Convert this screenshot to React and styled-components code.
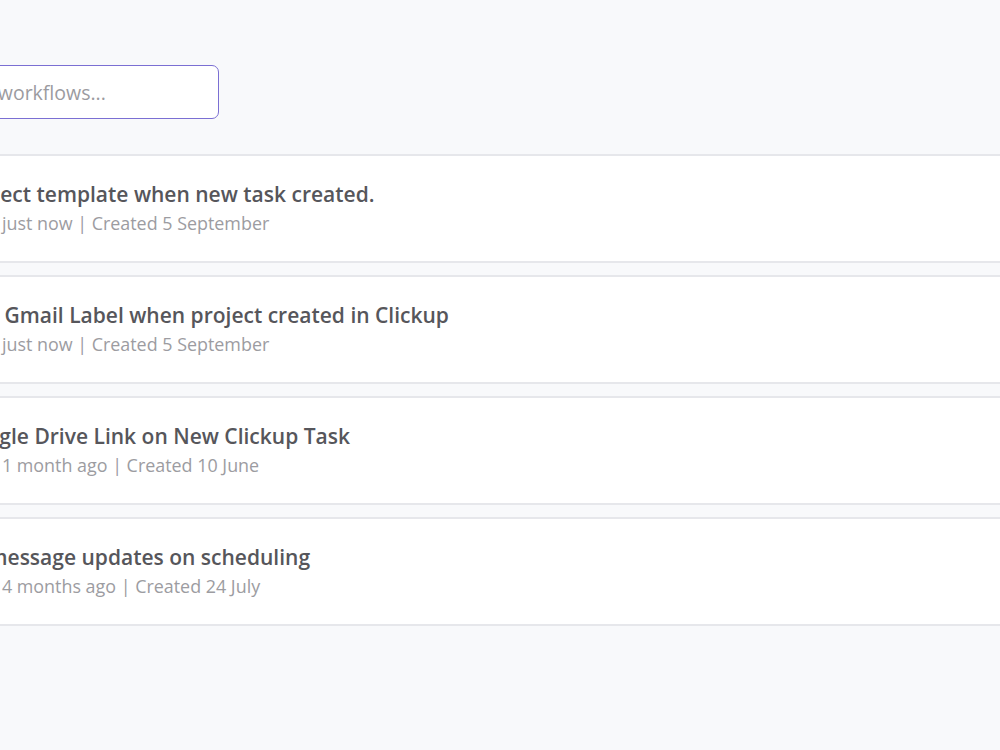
import React from 'react';
import styled, { createGlobalStyle } from 'styled-components';

const GlobalStyle = createGlobalStyle`
  html, body {
    margin: 0;
    padding: 0;
    background: #f8f9fb;
    overflow: hidden;
  }
  body {
    font-family: 'Open Sans', 'Liberation Sans', sans-serif;
  }
`;

const Page = styled.div`
  width: 1000px;
  height: 750px;
  overflow: hidden;
  background: #f8f9fb;
`;

const Content = styled.div`
  margin-left: -98px;
  width: 1140px;
  padding-top: 65px;
`;

const SearchBox = styled.input`
  display: block;
  box-sizing: border-box;
  width: 317px;
  height: 54px;
  padding: 0 18px 0 28px;
  border: 1.5px solid #7b6fd3;
  border-radius: 7px;
  background: #fff;
  font-family: inherit;
  font-size: 19.5px;
  color: #555;
  outline: none;

  &::placeholder {
    color: #9b9ba0;
  }
`;

const List = styled.div`
  display: flex;
  flex-direction: column;
  gap: 12px;
  margin-top: 35px;
`;

const Card = styled.div`
  box-sizing: border-box;
  height: 109px;
  padding: 25px 24px 0;
  background: #fff;
  border-top: 2px solid #e6e7eb;
  border-bottom: 2px solid #e6e7eb;
`;

const Title = styled.div`
  margin-left: ${(p) => p.$indent || 0}px;
  font-size: 21px;
  font-weight: 600;
  line-height: 26px;
  color: #56565b;
  white-space: nowrap;
`;

const Meta = styled.div`
  margin-top: 4px;
  margin-left: -1px;
  font-size: 17.9px;
  line-height: 24px;
  color: #9c9ca1;
  white-space: nowrap;
`;

const workflows = [
  { title: 'Use project template when new task created.', indent: -10, updated: 'just now', created: '5 September' },
  { title: 'Create Gmail Label when project created in Clickup', indent: 6, updated: 'just now', created: '5 September' },
  { title: 'Add Google Drive Link on New Clickup Task', indent: -13, updated: '1 month ago', created: '10 June' },
  { title: 'Send message updates on scheduling', indent: 6, updated: '4 months ago', created: '24 July' },
];

export default function App() {
  return (
    <Page>
      <GlobalStyle />
      <Content>
        <SearchBox placeholder="Search workflows..." />
        <List>
          {workflows.map((w) => (
            <Card key={w.title}>
              <Title $indent={w.indent}>{w.title}</Title>
              <Meta>
                Updated {w.updated} | Created {w.created}
              </Meta>
            </Card>
          ))}
        </List>
      </Content>
    </Page>
  );
}
